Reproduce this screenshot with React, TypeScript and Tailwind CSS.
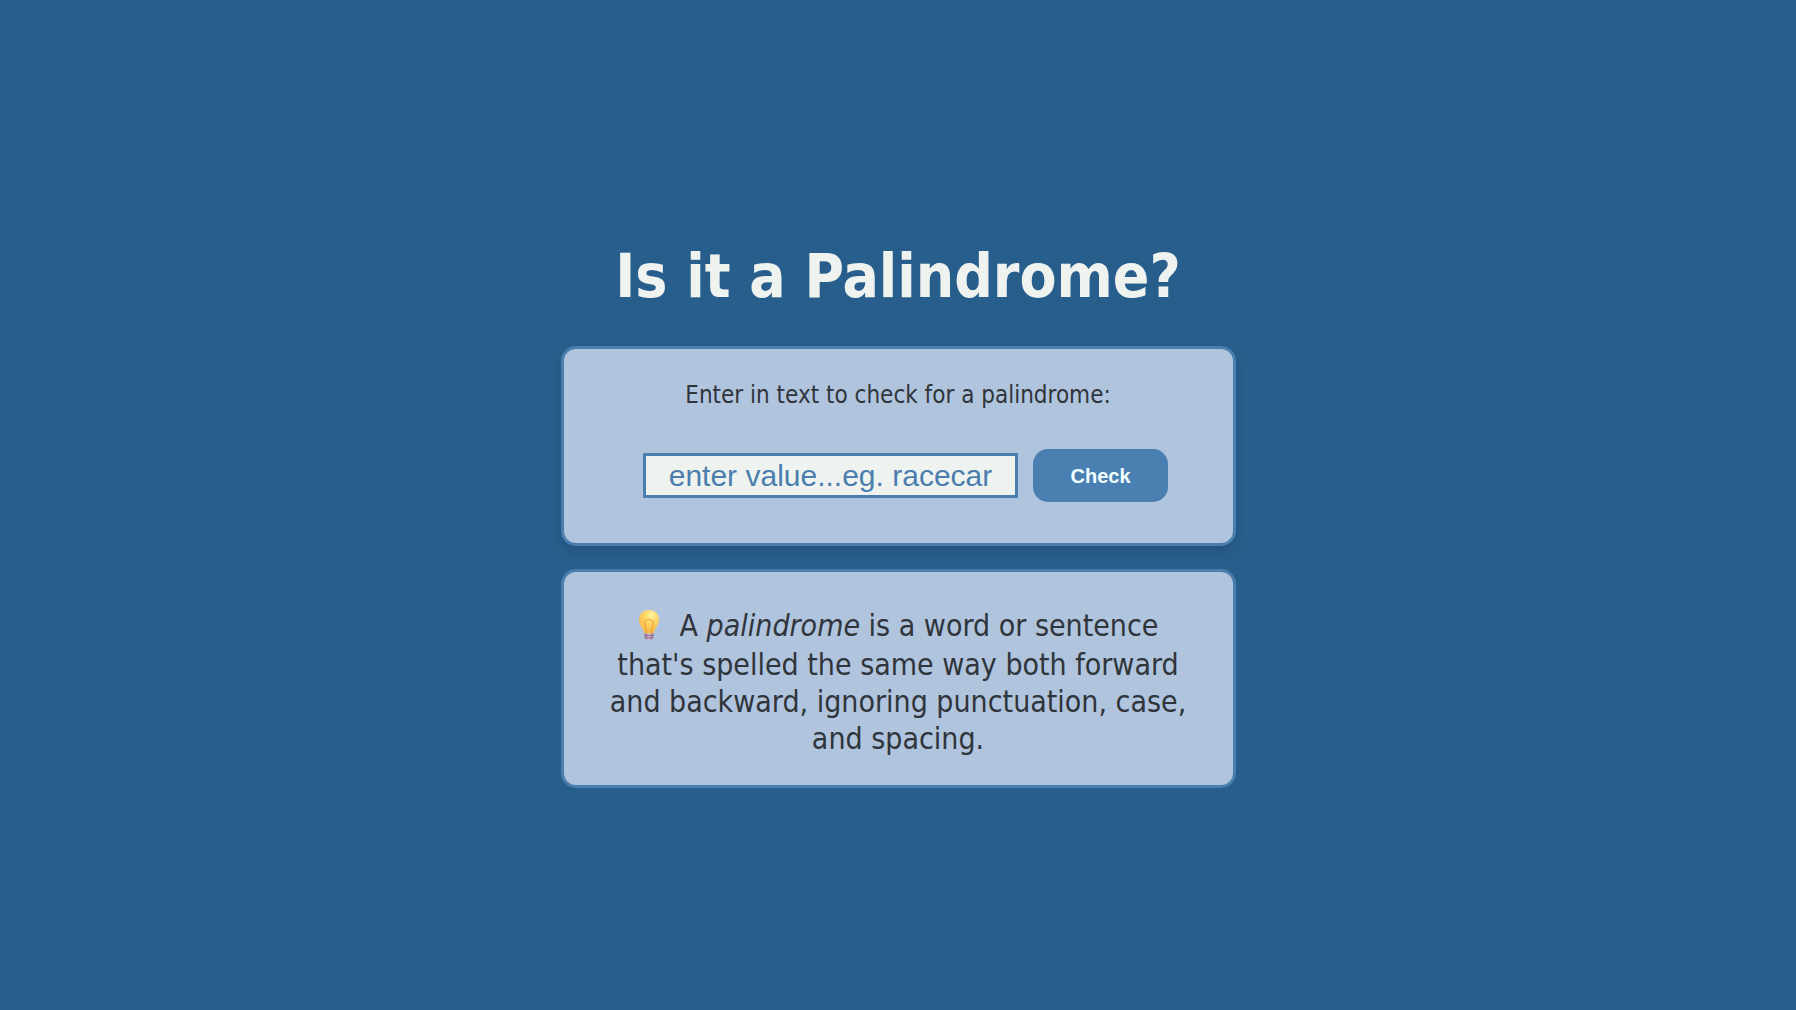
import { useState } from "react";
import type { FormEvent } from "react";

function Bulb() {
  return (
    <svg viewBox="0 0 22 37" className="mr-5 inline-block h-[37px] w-[22px] align-[-10px]" role="img" aria-label="Light bulb">
      <defs>
        <radialGradient id="glass" cx="0.62" cy="0.22" r="0.8">
          <stop offset="0" stopColor="#fff3a6" />
          <stop offset="0.35" stopColor="#fddb6c" />
          <stop offset="1" stopColor="#f6b545" />
        </radialGradient>
        <linearGradient id="base" x1="0" x2="1">
          <stop offset="0" stopColor="#8d7095" />
          <stop offset="0.5" stopColor="#d8c3d5" />
          <stop offset="1" stopColor="#8c6388" />
        </linearGradient>
      </defs>
      <path d="M11 1C5 1 1 5.300 1 10.800c0 4 2.200 6.600 3.700 9 .9 1.500 1.300 3.200 1.700 4.700h9.200c.4-1.500.8-3.200 1.700-4.700 1.500-2.400 3.700-5 3.700-9C21 5.300 17 1 11 1Z" fill="url(#glass)" />
      <path d="M9 24 7.500 17C5.300 12.500 8 10.500 11 10.500s5.700 2 3.500 6.500L13 24" fill="none" stroke="#eda53b" strokeWidth="1.200" />
      <path d="M6.500 24.500h9l-.3 4.500c-.8 1-2 1.600-2.700 2.500h-3c-.7-.9-2-1.500-2.700-2.500Z" fill="url(#base)" />
      <path d="m6.700 26.300 8.600.5m-8.300 1.700 7.900.6" stroke="#86617f" strokeWidth="0.800" />
    </svg>
  );
}

export default function App() {
  const [text, setText] = useState("");
  const [result, setResult] = useState("");

  const handleSubmit = (e: FormEvent) => {
    e.preventDefault();
    const cleaned = text.toLowerCase().replace(/[^a-z0-9]/g, "");
    if (!cleaned) return;
    const isPalindrome = cleaned === [...cleaned].reverse().join("");
    setResult(`${text} ${isPalindrome ? "is" : "is not"} a palindrome.`);
  };

  return (
    <main className="flex min-h-screen flex-col items-center justify-center bg-[#285e8b] px-4 pt-[18px] text-center font-['DejaVu_Sans_Condensed','Noto_Sans',sans-serif] text-[#2f353b]">
      <h1 className="mb-[34px] text-[60px] leading-[72px] font-bold text-[#eff3f0]">Is it a Palindrome?</h1>
      <form
        onSubmit={handleSubmit}
        className="w-full max-w-[675px] rounded-[15px] border-3 border-[#4a7eae] bg-[#b0c4de] px-9 pt-8 pb-[41px] shadow-[0_6px_9px_rgba(0,30,60,0.12)]"
      >
        <label htmlFor="text-input" className="block text-[24px] leading-[29px]">
          Enter in text to check for a palindrome:
        </label>
        <div className="mt-[39px] ml-[15px] flex items-center justify-center gap-[15px] font-['Liberation_Sans',sans-serif]">
          <input
            id="text-input"
            type="text"
            value={text}
            onChange={(e) => setText(e.target.value)}
            placeholder="enter value...eg. racecar"
            className="h-[45px] w-[375px] min-w-0 border-3 border-[#4a7eae] bg-[#eff3f0] text-center text-[30px] leading-9 text-[#4a7eae] placeholder:text-[#4a7eae]"
          />
          <button type="submit" className="h-[53px] w-[135px] rounded-[15px] bg-[#4a7fb2] text-[20px] font-bold text-[#f0ffff]">
            Check
          </button>
        </div>
        {result && <p className="mt-6 text-[24px]">{result}</p>}
      </form>
      <section className="mt-[23px] w-full max-w-[675px] rounded-[15px] border-3 border-[#4a7eae] bg-[#b0c4de] px-9 pt-[35px] pb-7">
        <p className="text-[30px] leading-[37px]">
          <Bulb />A <dfn>palindrome</dfn> is a word or sentence that's spelled the same way both forward and backward,
          ignoring punctuation, case, and spacing.
        </p>
      </section>
    </main>
  );
}
